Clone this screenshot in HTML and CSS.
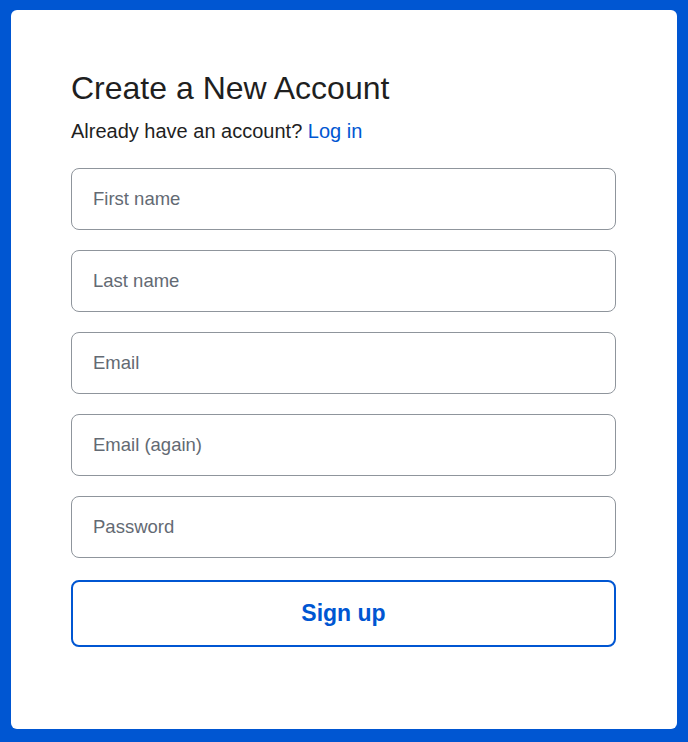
FILE: index.html
```html
<!DOCTYPE html>
<html lang="en">
<head>
<meta charset="utf-8">
<title>Create a New Account</title>
<link rel="stylesheet" href="styles.css">
</head>
<body>
<main class="card">
  <h1 class="title">Create a New Account</h1>
  <p class="subtitle">Already have an account? <a href="#" class="link">Log in</a></p>
  <form class="form">
    <input class="field" type="text" placeholder="First name">
    <input class="field" type="text" placeholder="Last name">
    <input class="field" type="email" placeholder="Email">
    <input class="field" type="email" placeholder="Email (again)">
    <input class="field" type="password" placeholder="Password">
    <button class="submit" type="button">Sign up</button>
  </form>
</main>
</body>
</html>
```
FILE: styles.css
```css
html, body {
  margin: 0;
  height: 100%;
}
body {
  background: #0056d2;
  padding: 10px 11px 13px 11px;
  box-sizing: border-box;
  font-family: "Liberation Sans", Arial, sans-serif;
}
.card {
  background: #ffffff;
  border-radius: 6px;
  height: 100%;
  box-sizing: border-box;
  padding: 60px 61px 0 60px;
}
.title {
  margin: 0;
  font-size: 32px;
  font-weight: normal;
  color: #1f1f1f;
  line-height: 37px;
}
.subtitle {
  margin: 12px 0 0 0;
  font-size: 20px;
  line-height: 24px;
  color: #1f1f1f;
}
.link {
  color: #0056d2;
  text-decoration: none;
}
.form {
  margin-top: 25px;
  display: flex;
  flex-direction: column;
  gap: 20px;
}
.field {
  height: 62px;
  box-sizing: border-box;
  border: 1px solid #8f959c;
  border-radius: 8px;
  padding: 0 21px;
  font-family: "Liberation Sans", Arial, sans-serif;
  font-size: 18.5px;
  color: #1f1f1f;
  background: #fff;
  outline: none;
}
.field::placeholder {
  color: #636a73;
  opacity: 1;
}
.submit {
  margin-top: 2px;
  height: 67px;
  border: 2px solid #0056d2;
  border-radius: 8px;
  background: #fff;
  color: #0056d2;
  font-family: "Liberation Sans", Arial, sans-serif;
  font-weight: bold;
  font-size: 23px;
  cursor: pointer;
}
```
